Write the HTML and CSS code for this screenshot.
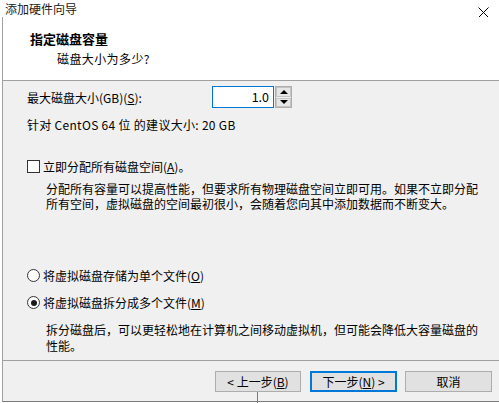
FILE: index.html
```html
<!DOCTYPE html>
<html>
<head>
<meta charset="utf-8">
<link rel="stylesheet" href="styles.css">
</head>
<body>
<div class="titlebar">
  <span class="title">添加硬件向导</span>
  <svg class="close" width="11" height="11" viewBox="0 0 11 11"><path d="M0.5 0.5 L10.5 10.5 M10.5 0.5 L0.5 10.5" stroke="#000" stroke-width="1"/></svg>
</div>
<div class="frame">
  <div class="header">
    <div class="heading">指定磁盘容量</div>
    <div class="subheading">磁盘大小为多少?</div>
  </div>
  <div class="content">
    <div class="size-row">
      <span class="size-label">最大磁盘大小(GB)(<u>S</u>):</span>
      <div class="spin">
        <div class="spin-input">1.0</div>
        <div class="spin-buttons">
          <div class="spin-btn"><span class="arrow-up"></span></div>
          <div class="spin-btn"><span class="arrow-down"></span></div>
        </div>
      </div>
    </div>
    <div class="hint">针对 CentOS 64 位 的建议大小: 20 GB</div>
    <div class="option check-row">
      <span class="checkbox"></span>
      <span class="opt-label">立即分配所有磁盘空间(<u>A</u>)。</span>
    </div>
    <div class="desc desc-alloc">分配所有容量可以提高性能，但要求所有物理磁盘空间立即可用。如果不立即分配<br>所有空间，虚拟磁盘的空间最初很小，会随着您向其中添加数据而不断变大。</div>
    <div class="option radio-single">
      <span class="radio"></span>
      <span class="opt-label">将虚拟磁盘存储为单个文件(<u>O</u>)</span>
    </div>
    <div class="option radio-multi">
      <span class="radio checked"></span>
      <span class="opt-label">将虚拟磁盘拆分成多个文件(<u>M</u>)</span>
    </div>
    <div class="desc desc-split">拆分磁盘后，可以更轻松地在计算机之间移动虚拟机，但可能会降低大容量磁盘的<br>性能。</div>
  </div>
  <div class="footer">
    <button class="btn">&lt; 上一步(<u>B</u>)</button>
    <button class="btn default">下一步(<u>N</u>) &gt;</button>
    <button class="btn cancel">取消</button>
  </div>
</div>
<div class="tick"></div>
</body>
</html>
```
FILE: styles.css
```css
html, body {
  margin: 0;
  padding: 0;
}
body {
  width: 499px;
  height: 403px;
  overflow: hidden;
  background: #ffffff;
  font-family: "Noto Sans CJK SC", "Noto Sans", sans-serif;
  font-size: 12px;
  color: #000;
  position: relative;
}
u {
  text-decoration: underline;
  text-underline-offset: 1px;
}
.titlebar {
  height: 17px;
  display: flex;
  align-items: flex-start;
  justify-content: space-between;
  background: #fff;
}
.title {
  font-size: 12px;
  line-height: 15px;
  margin-left: 5px;
  margin-top: 1px;
  color: #1a1a1a;
}
.close {
  margin-top: 7px;
  margin-right: 10px;
}
.frame {
  margin-left: 2px;
  border-left: 1px solid #a0a0a0;
  border-bottom: 1px solid #7a7a7a;
  height: 384px;
  display: flex;
  flex-direction: column;
  background: #f0f0f0;
}
.header {
  background: #fff;
  height: 64px;
  box-sizing: border-box;
  border-bottom: 1px solid #a0a0a0;
  padding: 14px 0 0 27px;
}
.heading {
  font-weight: bold;
  font-size: 13px;
  line-height: 15px;
}
.subheading {
  margin-top: 5px;
  margin-left: 27px;
  line-height: 15px;
  letter-spacing: 0.4px;
}
.content {
  height: 279px;
  box-sizing: border-box;
  padding: 5px 0 0 24px;
}
.size-row {
  display: flex;
  align-items: center;
  height: 22px;
}
.size-label {
  width: 185px;
  line-height: 15px;
}
.spin {
  display: flex;
  height: 22px;
}
.spin-input {
  width: 56px;
  height: 20px;
  border: 1px solid #0078d7;
  background: #fff;
  text-align: right;
  padding-right: 4px;
  line-height: 20px;
  font-size: 12.5px;
  box-sizing: content-box;
}
.spin-buttons {
  margin-left: 1px;
  width: 15px;
  height: 20px;
  border: 1px solid #adadad;
  display: flex;
  flex-direction: column;
  gap: 1px;
  padding: 0;
}
.spin-btn {
  flex: 1;
  background: #e6e6e6;
  border: 1px solid #c4c4c4;
  display: flex;
  align-items: center;
  justify-content: center;
}
.arrow-up {
  width: 0;
  height: 0;
  border-left: 4px solid transparent;
  border-right: 4px solid transparent;
  border-bottom: 4px solid #000;
}
.arrow-down {
  width: 0;
  height: 0;
  border-left: 4px solid transparent;
  border-right: 4px solid transparent;
  border-top: 4px solid #000;
}
.hint {
  margin-top: 9px;
  line-height: 15px;
  letter-spacing: 0.3px;
}
.option {
  display: flex;
  align-items: center;
  height: 15px;
  gap: 3px;
}
.opt-label {
  line-height: 15px;
  white-space: nowrap;
}
.check-row {
  margin-top: 27px;
}
.radio-single {
  margin-top: 57px;
}
.radio-multi {
  margin-top: 12px;
}
.checkbox {
  width: 11px;
  height: 11px;
  border: 1px solid #333;
  background: #fff;
  flex: none;
}
.radio {
  width: 11px;
  height: 11px;
  border: 1px solid #333;
  border-radius: 50%;
  background: #fff;
  flex: none;
  display: flex;
  align-items: center;
  justify-content: center;
}
.radio.checked::after {
  content: "";
  width: 6px;
  height: 6px;
  border-radius: 50%;
  background: #1a1a1a;
}
.desc {
  margin-left: 19px;
  line-height: 15px;
  white-space: nowrap;
}
.desc-alloc {
  margin-top: 7px;
}
.desc-split {
  margin-top: 12px;
  line-height: 16px;
}
.footer {
  flex: 1;
  border-top: 1px solid #a0a0a0;
  display: flex;
  justify-content: flex-end;
  align-items: flex-start;
  padding: 10px 7px 0 0;
  gap: 9px;
}
.btn {
  font-family: inherit;
  font-size: 12px;
  height: 21px;
  width: 86px;
  padding: 0;
  margin: 0;
  background: #e1e1e1;
  border: 1px solid #adadad;
  color: #000;
  line-height: 17px;
}
.btn.default {
  border: 2px solid #0078d7;
  width: 87px;
}
.btn.cancel {
  width: 87px;
  margin-left: -1px;
}
.tick {
  position: absolute;
  left: 257px;
  top: 392px;
  width: 1px;
  height: 11px;
  background: #7a7a7a;
}
```
